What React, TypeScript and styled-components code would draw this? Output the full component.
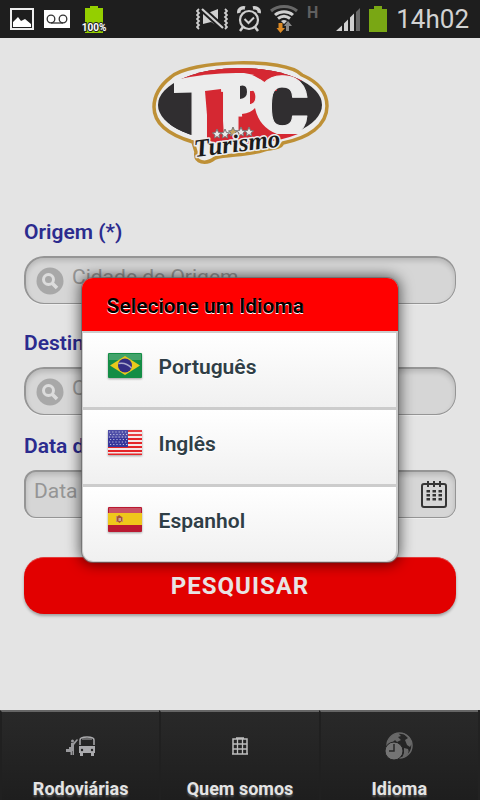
import React from "react";
import styled, { createGlobalStyle, css } from "styled-components";

const GlobalStyle = createGlobalStyle`
  *, *::before, *::after { box-sizing: border-box; }
  html, body { margin: 0; padding: 0; background: #e4e4e4; }
  body { font-family: Roboto, "Liberation Sans", sans-serif; }
  button, input { font-family: inherit; }
`;

const Screen = styled.div`
  min-height: 100vh;
  display: flex;
  flex-direction: column;
  background: #e4e4e4;
`;

const StatusBar = styled.div`
  height: 38px;
  display: flex;
  align-items: center;
  justify-content: space-between;
  padding: 0 11px 0 10px;
  background: #1e1e1e;
  color: #d2d2d2;
`;

const StatusGroup = styled.div<{ $gap: number }>`
  display: flex;
  align-items: center;
  gap: ${(p) => p.$gap}px;
`;

const NetworkType = styled.span`
  align-self: flex-start;
  margin: 5px 9px 0 0;
  font-size: 16px;
  line-height: 16px;
  font-weight: 700;
  color: #606060;
`;

const Clock = styled.time`
  font-size: 26px;
  line-height: 38px;
  color: #d2d2d2;
`;

const Stage = styled.div`
  position: relative;
  flex: 1;
  display: flex;
  flex-direction: column;
`;

const Main = styled.main`
  flex: 1;
  padding: 17px 24px 32px;
`;

const Brand = styled.div`
  display: flex;
  justify-content: center;
  margin-bottom: 45px;
`;

const Form = styled.form`
  display: flex;
  flex-direction: column;
`;

const Label = styled.label<{ $top: number }>`
  margin: ${(p) => p.$top}px 0 12px;
  font-size: 21px;
  line-height: 24px;
  font-weight: 600;
  color: #2b2b8e;
`;

const Field = styled.div<{ $radius: number; $pad: number }>`
  height: 48px;
  display: flex;
  align-items: center;
  gap: 8px;
  padding: 0 8px 0 ${(p) => p.$pad}px;
  border: 2px solid #959595;
  border-right-width: 1px;
  border-bottom-width: 1px;
  border-radius: ${(p) => p.$radius}px;
  background: #d6d6d6;
  box-shadow: inset 0 3px 5px rgba(0, 0, 0, 0.14), 0 1px 0 #eeeeee;
`;

const TextInput = styled.input`
  flex: 1;
  min-width: 0;
  height: 40px;
  padding: 0 0 7px;
  border: 0;
  outline: 0;
  background: transparent;
  color: #444444;
  font-size: 21px;
  &::placeholder { color: #959595; opacity: 1; }
`;

const IconButton = styled.button`
  display: flex;
  padding: 0;
  border: 0;
  background: none;
`;

const SubmitButton = styled.button`
  height: 57px;
  margin-top: 39px;
  border: 0;
  border-top: 1px solid #e43c3c;
  border-radius: 20px;
  background: #e20000;
  box-shadow: 0 2px 3px rgba(0, 0, 0, 0.3);
  color: #e8e4e4;
  font-size: 24px;
  font-weight: 700;
  letter-spacing: 1px;
`;

const TabBar = styled.nav`
  display: grid;
  grid-template-columns: repeat(3, 1fr);
  height: 90px;
  padding-right: 2px;
  background: #222222;
`;

const Tab = styled.a`
  display: flex;
  flex-direction: column;
  align-items: center;
  justify-content: space-between;
  padding: 18px 0 0;
  border-top: 2px solid #666666;
  border-left: 2px solid #202020;
  background: linear-gradient(#292929, #1e1e1e);
  color: #e4e4e4;
  text-decoration: none;
  text-shadow: 0 2px 2px #555555;
  font-size: 18px;
  line-height: 22px;
  font-weight: 700;
`;

const Overlay = styled.div`
  position: absolute;
  inset: 0;
  display: flex;
  align-items: center;
  justify-content: center;
  padding-top: 2px;
`;

const Dialog = styled.section`
  width: 66%;
  border-radius: 11px;
  overflow: hidden;
  background: #cccccc;
  box-shadow: 0 0 14px 2px rgba(0, 0, 0, 0.6), 0 0 0 1px rgba(160, 160, 160, 0.7);
`;

const DialogTitle = styled.h1`
  margin: 0;
  padding: 16px 25px 13px;
  background: #ff0000;
  color: #000000;
  font-size: 21px;
  line-height: 24px;
  font-weight: 600;
  text-shadow: 0 1px 0 #ffffff;
`;

const LanguageList = styled.ul`
  margin: 0;
  padding: 2px 2px 1px 1px;
  list-style: none;
  display: grid;
  gap: 3px;
`;

const LanguageItem = styled.li<{ $last?: boolean }>`
  display: flex;
  ${(p) =>
    p.$last &&
    css`
      border-radius: 0 0 10px 10px;
      overflow: hidden;
    `}
`;

const LanguageButton = styled.button`
  flex: 1;
  height: 74px;
  display: flex;
  align-items: center;
  gap: 17px;
  padding: 0 24px 6px 25px;
  border: 0;
  background: linear-gradient(#ffffff, #f0f0f0);
  color: #2f3e46;
  font-size: 21px;
  line-height: 24px;
  font-weight: 600;
  text-align: left;
  text-shadow: 0 1px 0 #ffffff;
`;

const FlagSvg = styled.svg`
  margin-bottom: 4px;
  filter: drop-shadow(0 1px 1px rgba(0, 0, 0, 0.35));
`;

const PictureIcon = () => (
  <svg width="24" height="24" viewBox="0 0 24 24">
    <rect x="1" y="2" width="22" height="20" fill="none" stroke="#eeeeee" strokeWidth="2" />
    <path d="M3 20V15L8 10L11 14L15 12L21 17V20Z" fill="#fff" />
  </svg>
);

const VoicemailIcon = () => (
  <svg width="26" height="18" viewBox="0 0 26 18">
    <rect width="26" height="18" fill="#fff" />
    <g fill="none" stroke="#333" strokeWidth="1.3">
      <circle cx="7" cy="9" r="3.8" />
      <circle cx="19" cy="9" r="3.8" />
      <path d="M7 13H19" />
    </g>
  </svg>
);

const BatteryPercentIcon = () => (
  <svg width="28" height="30" viewBox="0 0 28 30">
    <path d="M10 2H18V4H23V29H5V4H10Z" fill="#94cf00" />
    <text
      x="14"
      y="27"
      textAnchor="middle"
      fontFamily="Roboto, sans-serif"
      fontSize="10"
      fontWeight="700"
      fill="#fff"
      stroke="#222"
      strokeWidth="2"
      paintOrder="stroke"
    >
      100%
    </text>
  </svg>
);

const MutedVibrateIcon = () => (
  <svg width="32" height="24" viewBox="0 0 32 24" fill="none" stroke="#d0d0d0">
    <path d="M3 2L1 4L3 6L1 8L3 10L1 12L3 14L1 16L3 18L1 20L3 22M29 2L31 4L29 6L31 8L29 10L31 12L29 14L31 16L29 18L31 20L29 22" strokeWidth="1.800" />
    <path d="M7 6H12L22 2V19L15 15L7 17Z" fill="#d0d0d0" stroke="none" />
    <path d="M6 2L27 21" stroke="#1e1e1e" strokeWidth="6" />
    <path d="M6 2L27 21" strokeWidth="2.2" />
  </svg>
);

const AlarmIcon = () => (
  <svg width="24" height="26" viewBox="0 0 24 26" fill="none" stroke="#d0d0d0">
    <circle cx="12" cy="14" r="9" strokeWidth="2.2" />
    <path d="M7.5 13L11.5 17L17 11.5" strokeWidth="2" />
    <path d="M2 7C1 4 4 1 8 2M16 2C20 1 23 4 22 7" strokeWidth="3.5" />
    <path d="M6 21L3 25M18 21L21 25" strokeWidth="2.5" />
  </svg>
);

const WifiIcon = () => (
  <svg width="28" height="28" viewBox="0 0 28 28" fill="none" strokeWidth="3">
    <path d="M1 6C8 0 20 0 27 6" stroke="#686868" />
    <path d="M5 10C10 5.500 18 5.500 23 10" stroke="#d0d0d0" />
    <path d="M8 13.500C12 10.500 16 10.500 20 13.500" stroke="#d0d0d0" />
    <path d="M11 16Q14 14 17 16L14 19Z" fill="#d0d0d0" stroke="none" />
    <path d="M8.500 18H12.500V23H15L10.500 28L6.500 23H8.500Z" fill="#dc8a25" stroke="none" />
    <path d="M16 26H19V21H22L18 16L14 21H16Z" fill="#888" stroke="none" />
  </svg>
);

const SignalIcon = () => (
  <svg width="24" height="25" viewBox="0 0 24 25">
    <path d="M0 24L6 18.500V24ZM8 16.500L12 12.500V24H8ZM14 10.500L18 6.500V24H14Z" fill="#d0d0d0" />
    <path d="M20 5L24 1V24H20Z" fill="#686868" />
  </svg>
);

const BatteryIcon = () => (
  <svg width="18" height="27" viewBox="0 0 18 27">
    <path d="M5 0H13V3H18V26H0V3H5Z" fill="#79a714" />
  </svg>
);

const Logo = () => (
  <svg width="200" height="120" viewBox="0 4 200 120" role="img" aria-label="TPC Turismo">
    <defs>
      <clipPath id="badge">
        <ellipse cx="100" cy="54" rx="82" ry="37" />
      </clipPath>
    </defs>
    <path
      d="M31 26C50 9 145 6 162 24C178 31 187 42 187 55C187 75 168 87 143 92C140 98 132 97 124 99C106 105 88 103 75 107C66 114 54 112 56 101L53 91C29 84 14 73 14 56C14 43 22 33 31 26Z"
      fill="#ececec"
      stroke="#be9036"
      strokeWidth="3.500"
      strokeLinejoin="round"
    />
    <g clipPath="url(#badge)">
      <rect width="200" height="110" fill="#302e30" />
      <path d="M39 29Q99 3 158 26L137 37L134 90H58V30Z" fill="#d52832" />
      <path d="M38 8H162V30L150 27L126 34L110 22Q70 22 38 31Z" fill="#d52832" />
      <path d="M123 40H165V71H123Z" fill="#302e30" />
      <path d="M30 88H52L46 40H30Z" fill="#302e30" />
    </g>
    <path d="M34 29Q70 21 104 22Q120 24 125 36L112 40L34 42Z" fill="#ececec" />
    <text
      x="33 79 114"
      y="88 85 85"
      fontFamily="Roboto, 'Liberation Sans', sans-serif"
      fontSize="84"
      fontWeight="900"
      fill="#ececec"
      stroke="#ececec"
      strokeWidth="1"
      strokeLinejoin="round"
    >
      TPC
    </text>
    <path d="M92 30H110V54H92Z" fill="#ececec" />
    <path d="M100 35Q107 33 107 41Q107 47 100 48Z" fill="#302e30" />
    <path d="M65 40L81 38L84 86L69 88Z" fill="#d52832" />
    <path d="M102 63Q111 62 115 57Q119 76 137 83L158 83Q137 92 103 93Q83 95 67 89V83H103Z" fill="#d52832" />
    <g stroke="#777" strokeWidth="1">
      {[77, 85, 93, 101, 109].map((x, i) => (
        <path
          key={x}
          transform={`translate(${x} ${i < 2 ? 83 : 81})`}
          d="M0 -5L1.500 -1.500L4.500 -1L2 1L2.500 4L0 2.500L-2.500 4L-2 1L-4.500 -1L-1.500 -1.500Z"
          fill={i === 2 ? "#c5a461" : "#e8e8e8"}
        />
      ))}
    </g>
    <text
      x="55"
      y="106"
      transform="rotate(-7 55 106)"
      fontFamily="'Liberation Serif', serif"
      fontSize="25"
      fontStyle="italic"
      fontWeight="700"
      fill="#1b1b1b"
      stroke="#ececec"
      strokeWidth="3"
      strokeLinejoin="round"
      paintOrder="stroke"
    >
      Turismo
    </text>
  </svg>
);

const SearchIcon = () => (
  <svg width="28" height="28" viewBox="0 0 28 28" aria-hidden="true">
    <circle cx="14" cy="14" r="13.500" fill="#a8a8a8" />
    <circle cx="12.500" cy="12.500" r="5" fill="none" stroke="#dcdcdc" strokeWidth="3" />
    <path d="M16 16L21 21" stroke="#dcdcdc" strokeWidth="3.500" />
  </svg>
);

const CalendarIcon = () => (
  <svg width="26" height="27" viewBox="0 0 26 27" aria-hidden="true">
    <rect x="1" y="3" width="24" height="23" rx="2" fill="none" stroke="#353535" strokeWidth="2" />
    <path d="M7 0V6M13 0V6M19 0V6" stroke="#353535" strokeWidth="2" />
    <g fill="#353535">
      {[9, 13, 17].map((y) =>
        [5.5, 11.5, 17.5].map((x) => <rect key={`${x}-${y}`} x={x} y={y} width="3.500" height="2.500" />)
      )}
    </g>
  </svg>
);

const BrazilFlag = () => (
  <FlagSvg width="34" height="25" viewBox="0 0 34 25" aria-hidden="true">
    <rect width="34" height="25" rx="1" fill="#138d45" />
    <rect x="1" y="1" width="32" height="6" fill="#fff" opacity=".2" />
    <path d="M17 3L32 12.500L17 22L2 12.500Z" fill="#e8c91c" />
    <circle cx="17" cy="12.500" r="7" fill="#332d84" />
    <path d="M10.500 10.500Q18 9 23.500 15" fill="none" stroke="#aaa9cc" strokeWidth="1.500" />
  </FlagSvg>
);

const UsaFlag = () => (
  <FlagSvg width="34" height="25" viewBox="0 0 34 25" aria-hidden="true">
    <rect width="34" height="25" rx="1" fill="#f4e7e7" />
    <path d="M0 1H34M0 5H34M0 9H34M0 13H34M0 17H34M0 21H34M0 24.500H34" stroke="#e52428" strokeWidth="2.200" />
    <rect width="20" height="17" fill="#36369b" />
    <g stroke="#b9b9df" strokeWidth="1.200" strokeDasharray="1.200 2">
      <path d="M1 2H20M2 4.500H20M1 7H20M2 9.500H20M1 12H20M2 14.500H20" />
    </g>
    <rect width="34" height="8" fill="#fff" opacity=".12" />
  </FlagSvg>
);

const SpainFlag = () => (
  <FlagSvg width="34" height="25" viewBox="0 0 34 25" aria-hidden="true">
    <rect width="34" height="25" rx="1" fill="#b91931" />
    <rect y="6" width="34" height="12" fill="#efc71b" />
    <rect x="1" y="1" width="32" height="5" fill="#fff" opacity=".25" />
    <path d="M8 9H10V15H8ZM14 10H15V15H14Z" fill="#c58b6b" />
    <path d="M9 10L11 8L14 10V14L11.500 16L9 14Z" fill="#a95332" />
    <path d="M10.500 11H13V14H10.500Z" fill="#c5a1a1" />
  </FlagSvg>
);

const BusStopIcon = () => (
  <svg width="30" height="20" viewBox="0 0 30 20" aria-hidden="true">
    <circle cx="6.500" cy="5" r="1.500" fill="#99999c" />
    <path d="M5 7H7L11 3L12 4L8 9V19H6.500V15H6V19H4.500V16H0V13H3V11H5Z" fill="#99999c" />
    <path d="M14 9V4Q14 1 21 1Q28 1 28 4V9" fill="none" stroke="#aaaaad" strokeWidth="1.500" />
    <path d="M13 10H29V17H28V20H25V17H17V20H14V17H13Z" fill="#aaaaad" />
    <circle cx="16" cy="14" r="1.200" fill="#222" />
    <circle cx="26" cy="14" r="1.200" fill="#222" />
    <path d="M16 3H26" stroke="#aaaaad" strokeWidth="1" />
  </svg>
);

const BuildingIcon = () => (
  <svg width="18" height="20" viewBox="0 0 18 20" fill="none" stroke="#bdbdbd" aria-hidden="true">
    <path d="M2 3H16V18H2ZM1 18H17M5 2H13" strokeWidth="1.500" />
    <path d="M6.500 3V18M11.500 3V18M2 8H16M2 13H16" strokeWidth="1.300" />
  </svg>
);

const GlobeClockIcon = () => (
  <svg width="28" height="28" viewBox="0 0 28 28" aria-hidden="true">
    <circle cx="14.500" cy="13.500" r="12.500" fill="none" stroke="#686868" strokeWidth="1.500" />
    <path d="M3 9Q6 2 13 1L16 4L13 5L16 8L12 10L10 8L6 12L3 12ZM18 1Q25 3 27 11L25 15L22 13L20 8L23 6ZM19 16L23 17Q26 22 17 26L19 21Z" fill="#686868" />
    <circle cx="9" cy="19" r="9" fill="#747474" stroke="#252525" strokeWidth="1" />
    <path d="M9 12V19H4" fill="none" stroke="#292929" strokeWidth="1.500" />
  </svg>
);

const languages = [
  { name: "Português", Flag: BrazilFlag },
  { name: "Inglês", Flag: UsaFlag },
  { name: "Espanhol", Flag: SpainFlag },
];

const tabs = [
  { name: "Rodoviárias", href: "#rodoviarias", Icon: BusStopIcon },
  { name: "Quem somos", href: "#quem-somos", Icon: BuildingIcon },
  { name: "Idioma", href: "#idioma", Icon: GlobeClockIcon },
];

const TabIcon = styled.span`
  height: 32px;
  display: flex;
  align-items: center;
`;

export default function App() {
  return (
    <>
      <GlobalStyle />
      <Screen>
        <StatusBar>
          <StatusGroup $gap={10}>
            <PictureIcon />
            <VoicemailIcon />
            <BatteryPercentIcon />
          </StatusGroup>
          <StatusGroup $gap={9}>
            <MutedVibrateIcon />
            <AlarmIcon />
            <WifiIcon />
            <NetworkType>H</NetworkType>
            <SignalIcon />
            <BatteryIcon />
            <Clock>14h02</Clock>
          </StatusGroup>
        </StatusBar>
        <Stage>
          <Main>
            <Brand>
              <Logo />
            </Brand>
            <Form onSubmit={(e) => e.preventDefault()}>
              <Label htmlFor="origem" $top={0}>Origem (*)</Label>
              <Field $radius={20} $pad={10}>
                <SearchIcon />
                <TextInput id="origem" placeholder="Cidade de Origem" />
              </Field>
              <Label htmlFor="destino" $top={27}>Destino (*)</Label>
              <Field $radius={20} $pad={10}>
                <SearchIcon />
                <TextInput id="destino" placeholder="Cidade de Destino" />
              </Field>
              <Label htmlFor="data" $top={19}>Data da Viagem (*)</Label>
              <Field $radius={12} $pad={8}>
                <TextInput id="data" placeholder="Data da Viagem" />
                <IconButton type="button" aria-label="Abrir calendário">
                  <CalendarIcon />
                </IconButton>
              </Field>
              <SubmitButton type="submit">PESQUISAR</SubmitButton>
            </Form>
          </Main>
          <TabBar>
            {tabs.map(({ name, href, Icon }) => (
              <Tab key={name} href={href}>
                <TabIcon>
                  <Icon />
                </TabIcon>
                {name}
              </Tab>
            ))}
          </TabBar>
          <Overlay>
            <Dialog role="dialog" aria-labelledby="idioma-titulo">
              <DialogTitle id="idioma-titulo">Selecione um Idioma</DialogTitle>
              <LanguageList>
                {languages.map(({ name, Flag }, i) => (
                  <LanguageItem key={name} $last={i === languages.length - 1}>
                    <LanguageButton type="button">
                      <Flag />
                      {name}
                    </LanguageButton>
                  </LanguageItem>
                ))}
              </LanguageList>
            </Dialog>
          </Overlay>
        </Stage>
      </Screen>
    </>
  );
}
